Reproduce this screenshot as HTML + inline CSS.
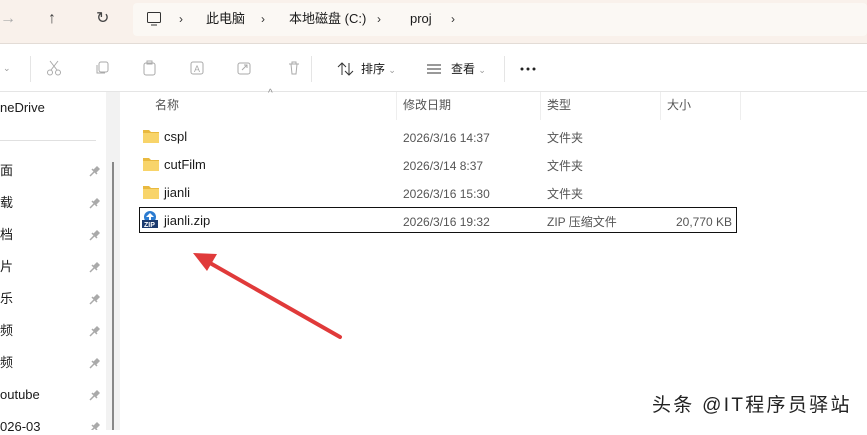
<!DOCTYPE html>
<html><head><meta charset="utf-8"><style>
*{margin:0;padding:0;box-sizing:border-box}
body{width:867px;height:430px;overflow:hidden;background:#fff;font-family:"Liberation Sans","Noto Sans CJK SC",sans-serif;font-size:12px;color:#1a1a1a;position:relative}
.abs{position:absolute;white-space:nowrap;line-height:16px}
.g{color:#555}
</style></head><body>
<div class="abs" style="left:0;top:0;width:867px;height:44px;background:#f9f1eb;border-bottom:1px solid #e3dcd6"></div>
<div class="abs" style="left:133px;top:3px;width:734px;height:33px;background:#fbf8f4;border-radius:4px"></div>
<div class="abs" style="left:0;top:11px;font-size:16px;color:#aaa">→</div>
<div class="abs" style="left:48px;top:11px;font-size:16px;color:#444">↑</div>
<div class="abs" style="left:96px;top:11px;font-size:16px;color:#444">↻</div>
<svg class="abs" style="left:146px;top:11px" width="16" height="16"><rect x="1.5" y="1.5" width="13" height="10" rx="1" fill="none" stroke="#333"/><path d="M5 14h6" stroke="#333"/></svg>
<div class="abs" style="left:179px;top:11px;color:#333">›</div>
<div class="abs" style="left:206px;top:11px;font-size:13px">此电脑</div>
<div class="abs" style="left:261px;top:11px;color:#333">›</div>
<div class="abs" style="left:289px;top:11px;font-size:13px">本地磁盘 (C:)</div>
<div class="abs" style="left:377px;top:11px;color:#333">›</div>
<div class="abs" style="left:410px;top:11px;font-size:13px">proj</div>
<div class="abs" style="left:451px;top:11px;color:#333">›</div>
<div class="abs" style="left:0;top:91px;width:867px;height:1px;background:#e5e5e5"></div>
<div class="abs" style="left:3px;top:60px;color:#999;font-size:9px">⌄</div>
<div class="abs" style="left:30px;top:56px;width:1px;height:26px;background:#e5e5e5"></div>
<svg class="abs" style="left:46px;top:60px" width="16" height="16" fill="none" stroke="#aaa"><path d="M4 1l7 9M12 1L5 10"/><circle cx="4" cy="12.5" r="2.5"/><circle cx="12" cy="12.5" r="2.5"/></svg>
<svg class="abs" style="left:94px;top:60px" width="16" height="16" fill="none" stroke="#aaa"><rect x="5" y="2" width="9" height="10" rx="2"/><path d="M3 5v8h8"/></svg>
<svg class="abs" style="left:142px;top:60px" width="16" height="16" fill="none" stroke="#aaa"><rect x="2" y="3" width="11" height="12" rx="2"/><rect x="5" y="1" width="5" height="3"/></svg>
<svg class="abs" style="left:189px;top:60px" width="16" height="16" fill="none" stroke="#aaa"><rect x="2" y="2" width="12" height="12" rx="2"/><text x="5" y="12" font-size="9" fill="#aaa" stroke="none">A</text></svg>
<svg class="abs" style="left:236px;top:60px" width="16" height="16" fill="none" stroke="#aaa"><rect x="2" y="3" width="12" height="11" rx="2"/><path d="M6 10l5-5M8 5h3v3"/></svg>
<svg class="abs" style="left:286px;top:60px" width="16" height="16" fill="none" stroke="#aaa"><path d="M3 4h10M5 4l1 10h4l1-10M6 4V2h4v2"/></svg>
<div class="abs" style="left:311px;top:56px;width:1px;height:26px;background:#e5e5e5"></div>
<svg class="abs" style="left:337px;top:61px" width="18" height="16" fill="none" stroke="#333"><path d="M5 14V2M1 6l4-4 4 4M12 2v12M8 10l4 4 4-4"/></svg>
<div class="abs" style="left:361px;top:61px">排序 <span style="color:#999;font-size:9px">⌄</span></div>
<svg class="abs" style="left:426px;top:62px" width="16" height="14" stroke="#333"><path d="M1 3h14M1 7h14M1 11h14"/></svg>
<div class="abs" style="left:451px;top:61px">查看 <span style="color:#999;font-size:9px">⌄</span></div>
<div class="abs" style="left:504px;top:56px;width:1px;height:26px;background:#e5e5e5"></div>
<svg class="abs" style="left:520px;top:67px" width="18" height="4" fill="#222"><circle cx="2" cy="2" r="1.5"/><circle cx="8" cy="2" r="1.5"/><circle cx="14" cy="2" r="1.5"/></svg>
<div class="abs" style="left:0;top:100px;font-size:13px">neDrive</div>
<div class="abs" style="left:0;top:140px;width:96px;height:1px;background:#e0e0e0"></div>
<div class="abs" style="left:106px;top:92px;width:14px;height:338px;background:#f2f2f2"></div>
<div class="abs" style="left:112px;top:162px;width:2px;height:268px;background:#888"></div>
<div class="abs" style="left:0;top:163px;font-size:13px">面</div>
<div class="abs" style="left:0;top:195px;font-size:13px">载</div>
<div class="abs" style="left:0;top:227px;font-size:13px">档</div>
<div class="abs" style="left:0;top:259px;font-size:13px">片</div>
<div class="abs" style="left:0;top:291px;font-size:13px">乐</div>
<div class="abs" style="left:0;top:323px;font-size:13px">频</div>
<div class="abs" style="left:0;top:355px;font-size:13px">频</div>
<div class="abs" style="left:0;top:387px;font-size:13px">outube</div>
<div class="abs" style="left:0;top:419px;font-size:13px">026-03</div>
<svg class="abs" style="left:88px;top:164px" width="14" height="266" fill="#aaa" stroke="#aaa" stroke-width="1.5"><g id="p"><path d="M5 6l4-4 3 3-4 4z" stroke="none"/><path d="M4 5l5 5M6 8l-4 4"/></g><use href="#p" y="32"/><use href="#p" y="64"/><use href="#p" y="96"/><use href="#p" y="128"/><use href="#p" y="160"/><use href="#p" y="192"/><use href="#p" y="224"/><use href="#p" y="256"/></svg>
<div class="abs" style="left:268px;top:86px;color:#888;font-size:10px">^</div>
<div class="abs g" style="left:155px;top:97px">名称</div>
<div class="abs" style="left:396px;top:92px;width:1px;height:28px;background:#eee"></div>
<div class="abs g" style="left:403px;top:97px">修改日期</div>
<div class="abs" style="left:540px;top:92px;width:1px;height:28px;background:#eee"></div>
<div class="abs g" style="left:547px;top:97px">类型</div>
<div class="abs" style="left:660px;top:92px;width:1px;height:28px;background:#eee"></div>
<div class="abs g" style="left:667px;top:97px">大小</div>
<div class="abs" style="left:740px;top:92px;width:1px;height:28px;background:#eee"></div>
<div class="abs" style="left:139px;top:207px;width:598px;height:26px;border:1px solid #111"></div>
<svg class="abs" style="left:143px;top:128px" width="16" height="76"><g id="f"><path d="M0 2h6l2 2h8v11H0z" fill="#e9b93f"/><path d="M0 5h16v10H0z" fill="#f8d46a"/></g><use href="#f" y="28"/><use href="#f" y="56"/></svg>
<svg class="abs" style="left:142px;top:211px" width="16" height="17"><circle cx="8" cy="6" r="6" fill="#2b7bd0"/><path d="M8 2l-4 4h3v3h2V6h3z" fill="#fff"/><rect x="0" y="9" width="16" height="8" fill="#1b3a6e"/><text x="2" y="16" font-size="7" font-weight="bold" fill="#fff" font-family="Liberation Sans">ZIP</text></svg>
<div class="abs" style="left:164px;top:129px;font-size:13px">cspl</div>
<div class="abs" style="left:164px;top:157px;font-size:13px">cutFilm</div>
<div class="abs" style="left:164px;top:185px;font-size:13px">jianli</div>
<div class="abs" style="left:164px;top:213px;font-size:13px">jianli.zip</div>
<div class="abs g" style="left:403px;top:130px">2026/3/16 14:37</div>
<div class="abs g" style="left:403px;top:158px">2026/3/14 8:37</div>
<div class="abs g" style="left:403px;top:186px">2026/3/16 15:30</div>
<div class="abs g" style="left:403px;top:214px">2026/3/16 19:32</div>
<div class="abs g" style="left:547px;top:130px">文件夹</div>
<div class="abs g" style="left:547px;top:158px">文件夹</div>
<div class="abs g" style="left:547px;top:186px">文件夹</div>
<div class="abs g" style="left:547px;top:214px">ZIP 压缩文件</div>
<div class="abs g" style="left:676px;top:214px">20,770 KB</div>
<svg class="abs" style="left:0;top:0" width="867" height="430"><path d="M340 337L210 263" stroke="#e03a3a" stroke-width="4" stroke-linecap="round"/><path d="M193 253l24 1-10 17z" fill="#e03a3a"/></svg>
<div class="abs" style="left:652px;top:395px;font-size:19px;line-height:22px;color:#222;letter-spacing:2.3px">头条 @IT程序员驿站</div>
</body></html>
